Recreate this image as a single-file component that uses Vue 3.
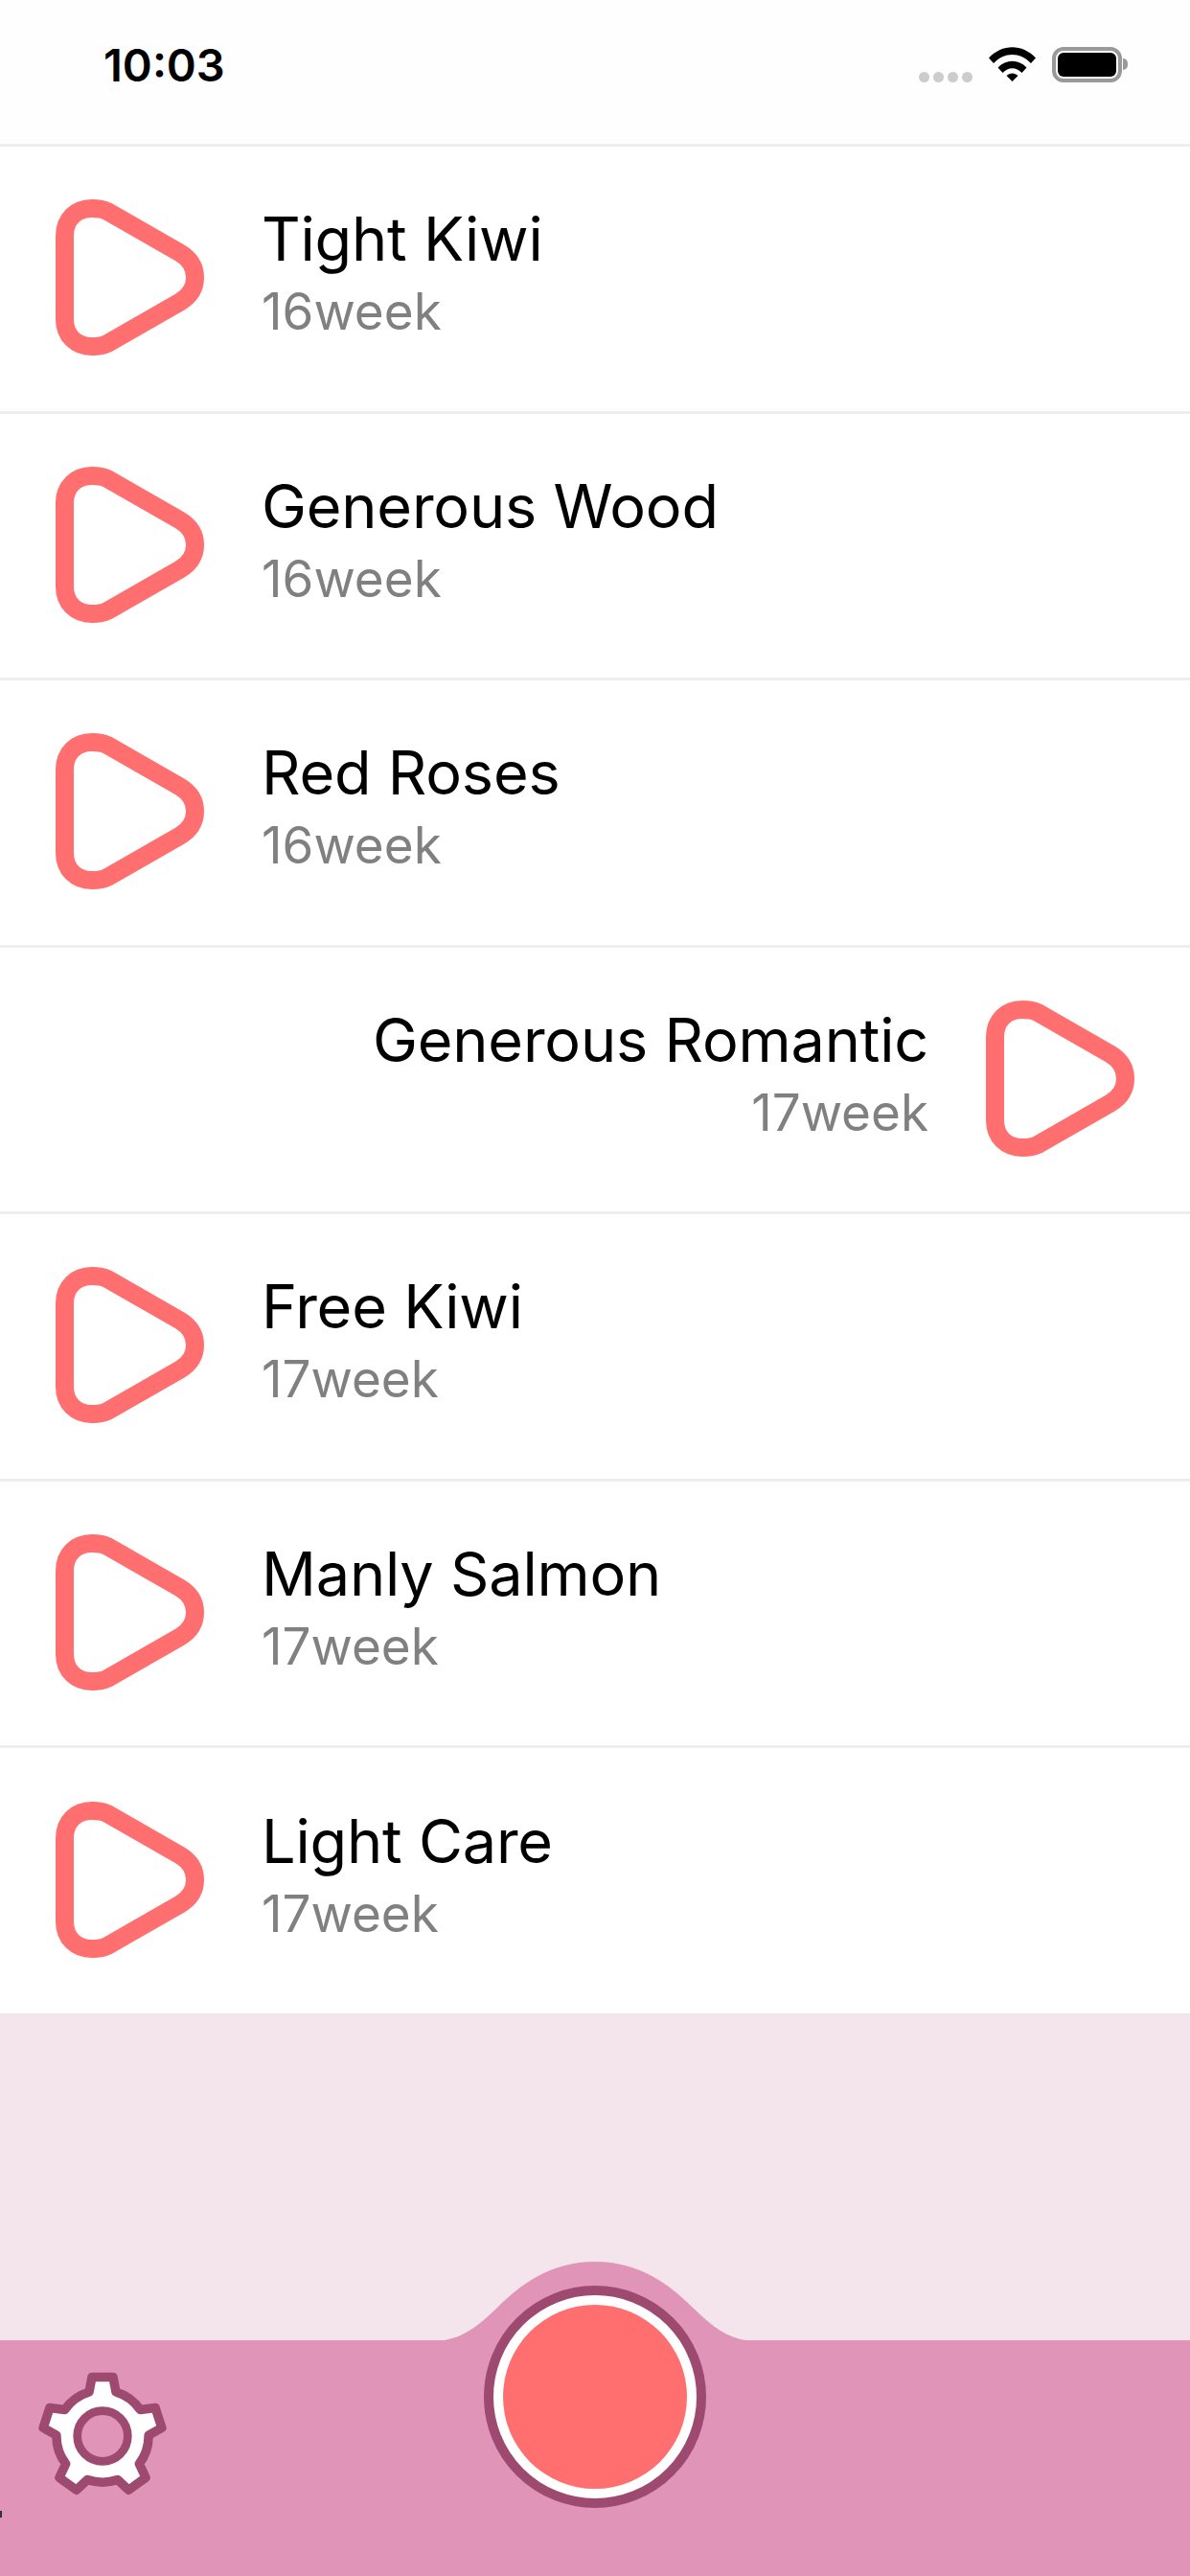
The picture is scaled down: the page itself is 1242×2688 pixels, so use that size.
<template>
  <div class="screen">
    <header class="status">
      <span class="status__time">10:03</span>
      <div class="status__icons">
        <div class="status__dots">
          <i v-for="n in 4" :key="n"></i>
        </div>
        <svg class="status__wifi" width="49" height="36" viewBox="0 0 49 36">
          <path d="M0 11.5 C14 -3.5 35 -3.5 49 11.5 L44 17 C32.500 5 16.500 5 5 17 Z" fill="#000" />
          <path d="M9.500 21.500 C18 12.500 31 12.500 39.500 21.500 L34.500 27 C28.500 20.500 20.500 20.500 14.500 27 Z" fill="#000" />
          <path d="M18.500 30 C22 26.500 27 26.500 30.500 30 L24.500 36 Z" fill="#000" />
        </svg>
        <div class="status__battery">
          <div class="status__charge"></div>
        </div>
        <div class="status__cap"></div>
      </div>
    </header>

    <ul class="list">
      <li v-for="item in items" :key="item.name" class="row" :class="{ 'row--flip': item.flip }">
        <svg class="row__play" width="155" height="163" viewBox="0 0 155 163">
          <path
            d="M9.500 38 C9.500 21 21 9.500 38 9.500 C44 9.500 49 10 54 12.500 L130 56 C140 62 145.500 70 145.500 81.500 C145.500 93 140 101 130 107 L54 150.500 C49 153 44 153.500 38 153.500 C21 153.500 9.500 142 9.500 125 Z"
            fill="none"
            stroke="#ff6f6f"
            stroke-width="19"
          />
        </svg>
        <div class="row__text">
          <div class="row__name">{{ item.name }}</div>
          <div class="row__week">{{ item.week }}</div>
        </div>
      </li>
    </ul>

    <div class="spacer"></div>

    <footer class="bar">
      <svg class="bar__bump" width="314" height="82" viewBox="0 0 314 82">
        <path d="M0 82 C25 78 42 60 56 47 C78 25 110 0 157 0 C204 0 236 25 258 47 C272 60 289 78 314 82 Z" fill="#e094b8" />
      </svg>
      <svg class="bar__gear" width="140" height="140" viewBox="-70 -70 140 140">
        <path :d="gearPath" fill="#fff" stroke="#9e4a70" stroke-width="9.500" stroke-linejoin="round" />
        <circle r="26.300" fill="#e094b8" stroke="#9e4a70" stroke-width="8.700" />
      </svg>
      <button class="record">
        <span class="record__inner"></span>
      </button>
      <span class="bar__mark"></span>
    </footer>
  </div>
</template>

<script setup>
const items = [
  { name: 'Tight Kiwi', week: '16week' },
  { name: 'Generous Wood', week: '16week' },
  { name: 'Red Roses', week: '16week' },
  { name: 'Generous Romantic', week: '17week', flip: true },
  { name: 'Free Kiwi', week: '17week' },
  { name: 'Manly Salmon', week: '17week' },
  { name: 'Light Care', week: '17week' },
]

// five teeth round a circle, first one pointing up
function buildGear() {
  const pt = (x, y, deg) => {
    const a = (deg * Math.PI) / 180
    return `${(x * Math.cos(a) - y * Math.sin(a)).toFixed(2)} ${(x * Math.sin(a) + y * Math.cos(a)).toFixed(2)}`
  }
  let d = ''
  for (let i = 0; i < 5; i++) {
    const deg = i * 72
    d += `${i === 0 ? 'M' : 'A48 48 0 0 1'} ${pt(-14, -46, deg)} `
    d += `L${pt(-11, -61.5, deg)} L${pt(11, -61.5, deg)} L${pt(14, -46, deg)} `
  }
  d += `A48 48 0 0 1 ${pt(-14, -46, 0)} Z`
  return d
}

const gearPath = buildGear()
</script>

<style>
html,
body {
  margin: 0;
  background: #fff;
}
</style>

<style scoped>
.screen {
  width: 1242px;
  height: 2688px;
  display: flex;
  flex-direction: column;
  overflow: hidden;
  background: #fff;
  font-family: Inter, "Liberation Sans", sans-serif;
}

.status {
  height: 150px;
  flex: none;
  box-sizing: border-box;
  padding: 0 65px 0 108px;
  display: flex;
  justify-content: space-between;
  align-items: flex-start;
  background: #fefefe;
}

.status__time {
  margin-top: 39px;
  font-size: 47px;
  line-height: 57px;
  font-weight: 600;
  color: #000;
}

.status__icons {
  display: flex;
  align-items: flex-start;
  padding-top: 49px;
}

.status__dots {
  display: flex;
  gap: 4px;
  margin-top: 26px;
  margin-right: 17px;
}

.status__dots i {
  width: 11px;
  height: 11px;
  border-radius: 50%;
  background: #ccc;
}

.status__wifi {
  margin-right: 17px;
}

.status__battery {
  width: 73px;
  height: 37px;
  box-sizing: border-box;
  border: 4px solid #999;
  border-radius: 12px;
  padding: 2px;
}

.status__charge {
  height: 100%;
  border-radius: 6px;
  background: #000;
}

.status__cap {
  width: 5px;
  height: 12px;
  margin: 12px 0 0 1px;
  border-radius: 0 6px 6px 0;
  background: #999;
}

.list {
  list-style: none;
  margin: 0;
  padding: 0;
  flex: none;
  border-top: 3px solid #eee;
}

.row {
  height: 278.500px;
  box-sizing: border-box;
  padding: 0 58px;
  display: flex;
  align-items: center;
  gap: 60px;
  border-bottom: 3px solid #eee;
}

.row:last-child {
  height: 277px;
  border-bottom: 0;
}

.row--flip {
  flex-direction: row-reverse;
  text-align: right;
}

.row__play {
  flex: none;
  margin-top: -2px;
}

.row__text {
  margin-top: -8px;
}

.row__name {
  margin-bottom: 7px;
  font-size: 63px;
  line-height: 70px;
  letter-spacing: -0.2px;
  color: #000;
}

.row__week {
  font-size: 53px;
  line-height: 68px;
  color: #808080;
}

.spacer {
  flex: 1;
  background: #f4e5ec;
}

.bar {
  position: relative;
  height: 246px;
  flex: none;
  box-sizing: border-box;
  padding: 30px 0 0 37px;
  background: #e094b8;
}

.bar__bump {
  position: absolute;
  left: 464px;
  top: -82px;
  display: block;
}

.bar__gear {
  display: block;
}

.bar__mark {
  position: absolute;
  left: 0;
  top: 178px;
  width: 2px;
  height: 7px;
  background: #333;
}

.record {
  position: absolute;
  left: 505px;
  top: -57px;
  width: 232px;
  height: 232px;
  box-sizing: border-box;
  padding: 10px;
  border: 10px solid #9e4a70;
  border-radius: 50%;
  background: #fff;
}

.record__inner {
  display: block;
  width: 192px;
  height: 192px;
  border-radius: 50%;
  background: #ff6f6f;
}
</style>
